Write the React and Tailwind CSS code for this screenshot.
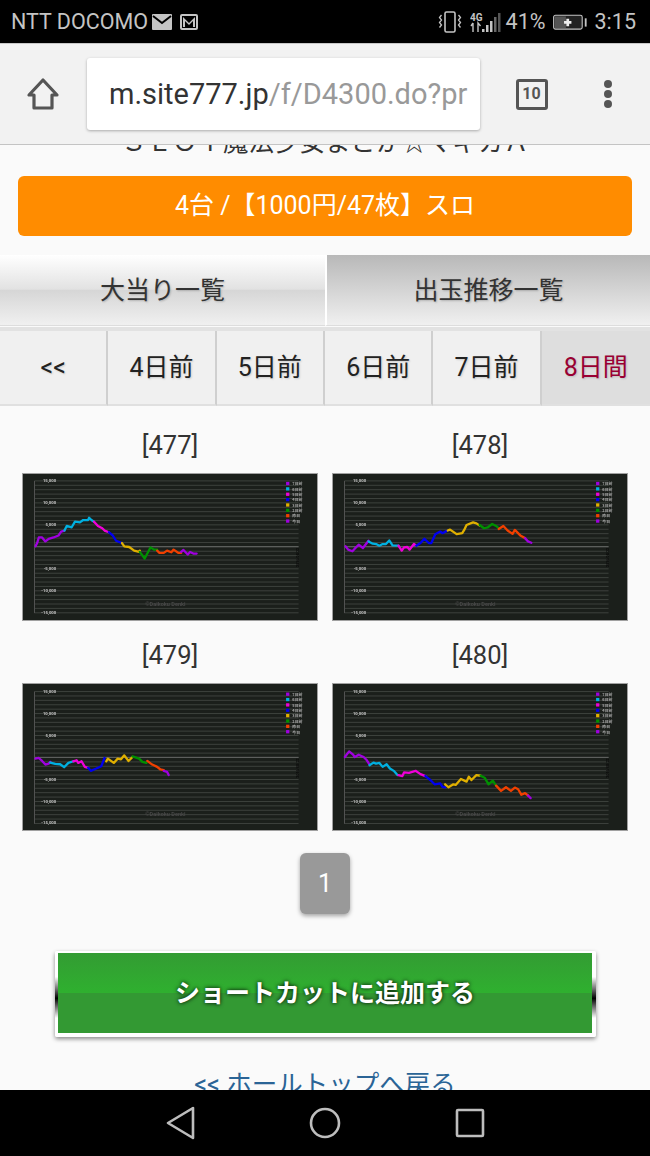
const FONT = "font-['Roboto','Noto_Sans_CJK_JP',sans-serif]";

const COLORS = ["#a000e0", "#00b0e0", "#f000d8", "#0000f0", "#e0b000", "#009000", "#f04000", "#a000e0"];
const LEGEND = ["7日前", "6日前", "5日前", "4日前", "3日前", "2日前", "昨日", "今日"];
const AXIS = [
  ["15,000", 46],
  ["10,000", 113],
  ["5,000", 180],
  ["-5,000", 313],
  ["-10,000", 380],
  ["-15,000", 446],
];

// points are in 3x crop coordinates, the viewBox takes care of the scale
const charts = [
  {
    id: "[477]",
    ox: 20,
    oy: 25,
    lines: [
      "55,245 60,235 65,218 75,218 85,230 95,222 110,218 125,212 133,200 143,197",
      "143,197 150,183 165,187 175,170 190,172 200,165 215,165 218,158 225,165 233,170",
      "233,170 245,183 258,190 265,197 278,202",
      "278,202 290,212 300,228 318,235",
      "318,235 325,245 340,247 355,258 370,262 372,258",
      "372,262 387,282 405,248 415,255 425,255",
      "425,258 432,265 445,265 455,258 468,263 475,255 490,265 498,265",
      "498,262 505,256 518,270 525,262 535,267 545,267",
    ],
  },
  {
    id: "[478]",
    ox: 22,
    oy: 25,
    lines: [
      "57,245 65,255 78,260 85,252 97,240 110,250 127,228",
      "127,230 140,237 150,238 160,243 170,238 180,238 190,227 200,242 218,243",
      "218,243 228,258 235,248 245,247 252,255 265,238 272,243",
      "272,243 285,235 297,222 310,235 318,235 330,208 345,200 352,205 365,198",
      "368,197 375,194 395,208 412,205 418,195 425,180 445,172 455,175 465,182",
      "465,180 478,190 490,187 503,177 515,183 523,190",
      "523,192 537,183 550,197 565,207 572,195 590,213 603,220",
      "603,220 612,230 622,234",
    ],
  },
  {
    id: "[479]",
    ox: 20,
    oy: 23,
    lines: [
      "55,250 65,248 75,257 85,268 95,265 100,260",
      "100,262 115,266 130,267 142,276 155,263 170,258",
      "170,258 180,255 185,263 195,258 205,275 215,278",
      "215,278 223,287 240,280 255,273 265,248",
      "270,258 275,250 293,263 305,250 315,252 325,240 338,257 350,245",
      "350,243 370,250 380,260 392,263",
      "395,257 410,268 425,275 435,283 445,285",
      "445,287 455,290 460,300",
    ],
  },
  {
    id: "[480]",
    ox: 22,
    oy: 23,
    lines: [
      "55,245 68,228 80,238 85,245 97,238 112,245 122,255 130,268",
      "130,270 142,262 150,265 160,263 170,275 182,267 192,280 205,288 215,300",
      "218,300 230,303 235,292 250,293 270,287 285,297 300,303",
      "300,303 315,315 328,328 345,325 352,336 360,337",
      "360,328 370,337 385,328 392,330 408,312 425,320 432,305 440,315 455,300 468,302",
      "468,302 480,308 492,328 505,317 515,332",
      "515,332 530,348 545,337 560,348 572,338 582,343 592,360 603,355 612,362",
      "612,362 620,370",
    ],
  },
];

function Chart({ id, ox, oy, lines }) {
  const grid = [];
  for (let i = 0; i <= 30; i++) grid.push(46 + i * 13.37);
  return (
    <div className="flex flex-col">
      <div className="h-[26px] flex items-center justify-center text-[25.5px] leading-none text-[#333]">{id}</div>
      <svg
        viewBox={`${ox} ${oy} 888 444`}
        className="mt-[14px] block w-[296px] h-[148px] border border-[#a0a0a0] bg-[#1b1f1b]"
      >
        <g className="blur-[0.35px]">
          {grid.map((y) => (
            <line key={y} x1={ox + 32} x2={ox + 835} y1={y} y2={y} stroke="#434843" strokeWidth="2.6" />
          ))}
          <line x1={ox + 32} x2={ox + 835} y1="246" y2="246" stroke="#666866" strokeWidth="3" />
          <line x1={ox + 32} x2={ox + 32} y1="46" y2="448" stroke="#555" strokeWidth="3" />
          {AXIS.map(([t, y]) => (
            <text key={t} x={ox + 98} y={y + 4} textAnchor="end" fontSize="13" fontWeight="700" fill="#c0c0c0" fontFamily="Roboto">
              {t}
            </text>
          ))}
          <text x={ox + 430} y="425" textAnchor="middle" fontSize="17" fontWeight="700" fill="#484848" fontFamily="Roboto">
            ©Daikoku Denki
          </text>
          <text
            transform={`translate(${ox + 835} 308) rotate(-90)`}
            fontSize="11"
            fontWeight="700"
            fill="#0a0a0a"
            fontFamily="Roboto"
          >
            2016/08/22
          </text>
          {LEGEND.map((t, i) => (
            <g key={t}>
              <rect x={ox + 797} y={49 + i * 16.3} width="10" height="10" fill={COLORS[i]} />
              <text x={ox + 816} y={59.500 + i * 16.3} fontSize="12" fontWeight="700" fill="#a4a4a4" fontFamily="'Noto Sans CJK JP'">
                {t}
              </text>
            </g>
          ))}
          {lines.map((pts, i) => (
            <polyline key={i} points={pts} fill="none" stroke={COLORS[i]} strokeWidth="7" strokeLinejoin="round" strokeLinecap="round" />
          ))}
        </g>
      </svg>
    </div>
  );
}

function StatusBar() {
  return (
    <div className="h-[44px] shrink-0 bg-black border-b border-[#c8c8c8] flex items-center text-[21.5px] text-[#c4c4c4] pl-[11px] pr-[14px]">
      <span className="leading-none">NTT DOCOMO</span>
      <svg width="20" height="16" viewBox="0 0 20 16" className="ml-[4px]">
        <rect width="20" height="16" rx="1" fill="#c4c4c4" />
        <path d="M1 2l9 7 9-7" fill="none" stroke="#000" strokeWidth="2" />
      </svg>
      <svg width="18" height="16" viewBox="0 0 18 16" className="ml-[8px]">
        <rect x="1" y="1" width="16" height="14" rx="1" fill="none" stroke="#c4c4c4" strokeWidth="2" />
        <path d="M3 3l6 6 6-6v10h-2V7l-4 4-4-4v6H3z" fill="#c4c4c4" />
      </svg>
      <div className="flex-1" />
      <svg width="24" height="24" viewBox="0 0 24 24" fill="none" stroke="#c4c4c4" strokeWidth="1.6">
        <rect x="7" y="2" width="10" height="20" rx="1.5" />
        <path d="M3.5 5l-2 2.5 2 2.5-2 2.5 2 2.5-2 2.5M20.5 5l2 2.5-2 2.5 2 2.5-2 2.500 2 2.500" strokeWidth="1.3" />
      </svg>
      <svg width="32" height="24" viewBox="0 0 32 24" className="ml-[8px]">
        <text x="0" y="11" fontSize="10" fontWeight="700" fill="#c4c4c4" fontFamily="Roboto">4G</text>
        <path d="M3 13v9M3 13l-2 3M8 22v-9l2.500 3" fill="none" stroke="#c4c4c4" strokeWidth="1.4" />
        <rect x="12" y="19" width="2.500" height="3" fill="#c4c4c4" />
        <rect x="16" y="15" width="2.500" height="7" fill="#c4c4c4" />
        <rect x="20" y="11" width="2.500" height="11" fill="#c4c4c4" />
        <rect x="24" y="7" width="2.500" height="15" fill="#666" />
        <rect x="28" y="3" width="2.500" height="19" fill="#555" />
      </svg>
      <span className="ml-[4px] leading-none">41%</span>
      <svg width="35" height="18" viewBox="0 0 38 18" className="ml-[7px]">
        <rect x="0.700" y="1.700" width="31" height="15" rx="2" fill="#222" stroke="#c4c4c4" strokeWidth="1.2" />
        <rect x="2" y="3" width="12" height="12.500" fill="#555" />
        <path d="M16 5.500v8M12 9.500h8" stroke="#eee" strokeWidth="3" />
        <rect x="34.500" y="5" width="2" height="9" fill="#c4c4c4" />
      </svg>
      <span className="ml-[7px] leading-none">3:15</span>
    </div>
  );
}

function Toolbar() {
  return (
    <div className="h-[101px] shrink-0 bg-[#f2f2f2] border-b border-[#c4c4c4] flex items-center">
      <div className="w-[87px] flex justify-center pr-[2px]">
        <svg width="34" height="34" viewBox="0 0 34 34" fill="none" stroke="#555" strokeWidth="3.2" strokeLinejoin="round">
          <path d="M17 3L3 18h5v13h18V18h5z" />
        </svg>
      </div>
      <div className="w-[393px] h-[72px] bg-white rounded-[3px] shadow-[0_1px_3px_rgba(0,0,0,0.3)] flex items-center pl-[22px] overflow-hidden whitespace-nowrap text-[29px] leading-none">
        <span className="text-[#333]">m.site777.jp</span>
        <span className="text-[#999]">/f/D4300.do?pr</span>
      </div>
      <div className="w-[103px] flex justify-center">
        <div className="w-[32px] h-[31px] border-[3px] border-[#555] rounded-[3px] flex items-center justify-center text-[16px] font-bold text-[#555] leading-none">
          10
        </div>
      </div>
      <div className="flex-1 flex flex-col items-center gap-[2px] pr-[17px]">
        <div className="w-[8px] h-[8px] rounded-full bg-[#555]" />
        <div className="w-[8px] h-[8px] rounded-full bg-[#555]" />
        <div className="w-[8px] h-[8px] rounded-full bg-[#555]" />
      </div>
    </div>
  );
}

function NavBar() {
  return (
    <div className="h-[66px] shrink-0 bg-black flex items-center justify-center">
      <svg width="340" height="40" viewBox="0 0 340 40" fill="none" stroke="#bdbdbd" strokeWidth="2.6" strokeLinejoin="round">
        <path d="M38 5v30L13 20z" />
        <circle cx="170" cy="20" r="14" />
        <rect x="302" y="7" width="26" height="26" rx="1" />
      </svg>
    </div>
  );
}

export default function App() {
  const days = ["<<", "4日前", "5日前", "6日前", "7日前"];
  return (
    <div className={`h-[1156px] w-[650px] flex flex-col overflow-hidden bg-[#fafafa] ${FONT}`}>
      <StatusBar />
      <Toolbar />
      <main className="flex-1 overflow-hidden">
        <div className="-mt-[18px] h-[30px] mb-[19px] text-center text-[25.5px] leading-[30px] text-[#333] whitespace-nowrap">
          ＳＬＯＴ魔法少女まどか☆マギカＡ
        </div>
        <div className="mx-[18px] h-[60px] rounded-[6px] bg-[#ff8c00] flex items-center justify-center text-[25px] text-white">
          4台 /【1000円/47枚】スロ
        </div>

        <div className="mt-[19px] grid grid-cols-2 text-[25px] text-[#333] leading-none [text-shadow:1px_1px_2px_rgba(0,0,0,0.2)]">
          <div className="h-[71px] border-b border-[#ddd] flex items-center justify-center bg-[linear-gradient(#ffffff_0%,#e2e2e2_49%,#d6d6d6_50%,#f0f0f0_100%)]">
            大当り一覧
          </div>
          <div className="h-[71px] border-l-2 border-b border-l-white border-b-[#ddd] flex items-center justify-center bg-[linear-gradient(#b8b8b8_0%,#f0f0f0_100%)]">
            出玉推移一覧
          </div>
        </div>

        <div className="mt-[1px] border-t-[4px] border-[#e2e2e2] grid grid-cols-6 text-[25px] leading-none text-[#222]">
          {days.map((d) => (
            <div key={d} className="h-[75px] bg-[#f0f0f0] border-r-2 border-b-2 border-r-[#cfcfcf] border-b-[#e0e0e0] flex items-center justify-center [text-shadow:1px_1px_2px_rgba(0,0,0,0.15)]">
              {d}
            </div>
          ))}
          <div className="h-[75px] bg-[#dedede] border-b-2 border-b-[#e0e0e0] flex items-center justify-center text-[#990033] [text-shadow:1px_1px_2px_rgba(0,0,0,0.15)]">
            8日間
          </div>
        </div>

        <div className="mt-[27px] px-[22px] grid grid-cols-2 gap-x-[14px] gap-y-[22px]">
          {charts.map((c) => (
            <Chart key={c.id} {...c} />
          ))}
        </div>

        <div className="mt-[22px] flex justify-center">
          <div className="w-[50px] h-[61px] rounded-[6px] bg-[#999] shadow-[0_2px_4px_rgba(0,0,0,0.35)] flex items-center justify-center text-white text-[25px] leading-none">
            1
          </div>
        </div>

        <div className="mt-[37px] ml-[55px] mr-[54px] pt-[2px] pb-[4px] pl-[3px] pr-[4px] rounded-[2px] bg-[linear-gradient(#ffffff_30%,#000000_55%,#ffffff_78%)] shadow-[0_2px_4px_rgba(0,0,0,0.45)]">
          <div className="h-[80px] bg-[linear-gradient(#339c33_0%,#2fb02f_49.5%,#339933_50%,#339933_100%)] flex items-center justify-center text-white font-bold text-[25px] leading-none [text-shadow:0_0_4px_#000]">
            ショートカットに追加する
          </div>
        </div>

        <div className="mt-[35px] text-center text-[25.5px] leading-none text-[#2a6496]">
          &lt;&lt; ホールトップへ戻る
        </div>
      </main>
      <NavBar />
    </div>
  );
}
